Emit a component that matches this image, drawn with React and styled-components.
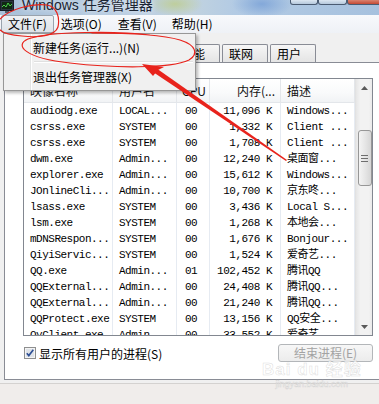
import React from 'react';
import styled, { createGlobalStyle } from 'styled-components';

const GlobalStyle = createGlobalStyle`
  html, body {
    margin: 0;
    padding: 0;
    background: #f0f0f0;
  }
  body {
    font-family: 'Noto Sans CJK SC', 'Noto Sans', sans-serif;
  }
`;

const Page = styled.div`
  position: relative;
  width: 379px;
  height: 404px;
  overflow: hidden;
  background: #f0f0f0;
  display: flex;
  flex-direction: column;
`;

const TitleBar = styled.div`
  display: flex;
  align-items: flex-start;
  height: 15px;
  flex-shrink: 0;
  overflow: hidden;
  background:
    radial-gradient(ellipse 28px 12px at 175px 4px, rgba(190, 205, 140, 0.8), transparent),
    radial-gradient(ellipse 30px 14px at 262px 4px, rgba(120, 160, 215, 0.8), transparent),
    linear-gradient(90deg, #a9c1d9 0%, #b9cde2 35%, #c2d3df 50%, #b3cbe4 62%, #a6c1de 100%);
`;

const AppIcon = styled.svg`
  flex-shrink: 0;
  margin: 0 8px 0 0;
`;

const Title = styled.span`
  font-family: 'Liberation Sans', 'Noto Sans CJK SC', sans-serif;
  font-size: 14px;
  line-height: 15px;
  margin-top: -2px;
  color: #1c2533;
  text-shadow: 0 0 6px rgba(255, 255, 255, 0.9);
  white-space: nowrap;
`;

const Controls = styled.div`
  display: flex;
  margin-left: auto;
  margin-right: -3px;
`;

const CtrlButton = styled.div`
  width: ${(p) => p.$w}px;
  height: 4px;
  border: 1px solid #4a5b72;
  border-top: none;
  border-radius: 0 0 3px 3px;
  background: ${(p) => (p.$close ? 'linear-gradient(#d9826f, #c44a35)' : 'linear-gradient(#dbe6f1, #b5c8dc)')};
`;

const MenuBar = styled.div`
  display: flex;
  align-items: center;
  height: 18px;
  flex-shrink: 0;
  padding-left: 1px;
  background: linear-gradient(#f7f9fc, #eef1f6);
`;

const MenuItem = styled.div`
  height: 16px;
  line-height: 16px;
  padding: 0 ${(p) => p.$pad}px 0 6px;
  font-size: 12px;
  color: #000;
  border: 1px solid ${(p) => (p.$active ? '#9aa3ad' : 'transparent')};
  border-radius: 2px;
  background: ${(p) => (p.$active ? 'linear-gradient(#eef1f4, #dde2e8)' : 'transparent')};
`;

const TabStrip = styled.div`
  display: flex;
  gap: 2px;
  margin-top: 11px;
  padding-left: 6px;
  height: 18px;
  flex-shrink: 0;
`;

const Tab = styled.div`
  box-sizing: border-box;
  width: ${(p) => p.$w}px;
  height: 18px;
  padding-left: 6px;
  font-size: 12px;
  line-height: 17px;
  color: #000;
  border: 1px solid #898c95;
  border-bottom: none;
  border-radius: 2px 2px 0 0;
  background: ${(p) => (p.$selected ? '#fff' : 'linear-gradient(#f6f6f6, #e4e4e4)')};
`;

const Panel = styled.div`
  box-sizing: border-box;
  width: 390px;
  height: 318px;
  margin-left: 4px;
  flex-shrink: 0;
  padding: 15px 0 0 18px;
  border: 1px solid #898c95;
  background: #fff;
`;

const ListView = styled.div`
  box-sizing: border-box;
  display: flex;
  width: 350px;
  height: 258px;
  border: 1px solid #828790;
  overflow: hidden;
`;

const Table = styled.div`
  width: 331px;
  flex-shrink: 0;
`;

const COLS = '89px 64px 33px 71px 74px';

const HeaderRow = styled.div`
  display: grid;
  grid-template-columns: ${COLS};
  height: 23px;
  border-bottom: 1px solid #e3e6ea;
  background: linear-gradient(#ffffff, #f9fafb 60%, #f1f3f5);
`;

const HeaderCell = styled.div`
  font-size: 12px;
  line-height: 23px;
  padding: 0 ${(p) => (p.$right ? '5px' : '6px')};
  text-align: ${(p) => (p.$right ? 'right' : 'left')};
  border-right: 1px solid #e3e6ea;
  white-space: nowrap;
  overflow: hidden;
  color: #111;
`;

const Row = styled.div`
  display: grid;
  grid-template-columns: ${COLS};
  height: 16px;
`;

const Cell = styled.div`
  font-family: 'Liberation Mono', 'Noto Sans CJK SC', monospace;
  font-size: 11px;
  letter-spacing: -0.5px;
  line-height: 16px;
  color: #000;
  padding: ${(p) => p.$pad};
  text-align: ${(p) => (p.$right ? 'right' : 'left')};
  border-right: 1px solid #e6ebf2;
  white-space: nowrap;
  overflow: hidden;
`;

const ScrollBar = styled.div`
  width: 17px;
  flex-shrink: 0;
  display: flex;
  flex-direction: column;
  align-items: center;
  background: linear-gradient(90deg, #e6e6e6, #f2f2f2 25%, #f2f2f2 75%, #e8e8e8);
  border-left: 1px solid #e2e2e2;
`;

const ArrowBox = styled.div`
  height: 17px;
  width: 17px;
  display: flex;
  align-items: center;
  justify-content: center;
  flex-shrink: 0;
`;

const Thumb = styled.div`
  box-sizing: border-box;
  width: 14px;
  height: 56px;
  margin-top: 34px;
  border: 1px solid #979797;
  border-radius: 3px;
  background: linear-gradient(90deg, #f4f4f4, #e6e6e6 50%, #d6d6d6);
  display: flex;
  align-items: center;
  justify-content: center;
`;

const Spacer = styled.div`
  flex: 1;
`;

const Footer = styled.div`
  display: flex;
  align-items: center;
  justify-content: space-between;
  width: 349px;
  margin-top: 8px;
  padding-left: 1px;
  height: 18px;
`;

const CheckLabel = styled.label`
  display: flex;
  align-items: center;
  gap: 3px;
  font-size: 12px;
  color: #000;
`;

const Button = styled.div`
  box-sizing: border-box;
  width: 95px;
  height: 18px;
  border: 1px solid #b3b6b9;
  border-radius: 3px;
  background: linear-gradient(#f7f7f7, #ececec);
  color: #a3a3a3;
  font-size: 12px;
  line-height: 16px;
  text-align: center;
`;

const StatusBar = styled.div`
  flex: 1;
  margin-top: 3px;
  border-top: 1px solid #d4d2d0;
  background: #f0edeb;
`;

const DropMenu = styled.div`
  position: absolute;
  top: 33px;
  left: 3px;
  box-sizing: border-box;
  width: 193px;
  height: 58px;
  padding: 3px 2px;
  border: 1px solid #979797;
  background: #f0f0f0;
  box-shadow: 2px 2px 3px rgba(0, 0, 0, 0.28);
  display: flex;
  flex-direction: column;
  background-image: linear-gradient(90deg, transparent 26px, #e2e3e3 26px, #e2e3e3 27px, #fff 27px, #fff 28px, transparent 28px);
`;

const DropItem = styled.div`
  height: 22px;
  line-height: 22px;
  padding-left: 27px;
  font-size: 12px;
  color: #000;
`;

const Separator = styled.div`
  height: 2px;
  margin: 2px 0 3px 28px;
  border-top: 1px solid #e0e0e0;
  border-bottom: 1px solid #fff;
  box-sizing: border-box;
`;

const Overlay = styled.svg`
  position: absolute;
  top: 0;
  left: 0;
  pointer-events: none;
`;

const Watermark = styled.div`
  position: absolute;
  left: 262px;
  top: 360px;
  display: flex;
  flex-direction: column;
  align-items: center;
  pointer-events: none;
  color: rgba(255, 255, 255, 0.7);
  -webkit-text-stroke: 0.5px rgba(185, 185, 185, 0.5);
`;

const MarkBig = styled.span`
  font-family: 'Liberation Sans', 'Noto Sans CJK SC', sans-serif;
  font-weight: bold;
  font-size: 17px;
  line-height: 19px;
  letter-spacing: 1px;
`;

const MarkSmall = styled.span`
  font-family: 'Liberation Sans', sans-serif;
  font-size: 9px;
  line-height: 11px;
`;

const rows = [
  ['audiodg.exe', 'LOCAL...', '00', '11,096 K', 'Windows...'],
  ['csrss.exe', 'SYSTEM', '00', '1,332 K', 'Client ...'],
  ['csrss.exe', 'SYSTEM', '00', '1,708 K', 'Client ...'],
  ['dwm.exe', 'Admin...', '00', '12,240 K', '桌面窗...'],
  ['explorer.exe', 'Admin...', '00', '15,612 K', 'Windows...'],
  ['JOnlineCli...', 'Admin...', '00', '10,700 K', '京东咚...'],
  ['lsass.exe', 'SYSTEM', '00', '3,436 K', 'Local S...'],
  ['lsm.exe', 'SYSTEM', '00', '1,268 K', '本地会...'],
  ['mDNSRespon...', 'SYSTEM', '00', '1,676 K', 'Bonjour...'],
  ['QiyiServic...', 'SYSTEM', '00', '1,524 K', '爱奇艺...'],
  ['QQ.exe', 'Admin...', '01', '102,452 K', '腾讯QQ'],
  ['QQExternal...', 'Admin...', '00', '24,408 K', '腾讯QQ...'],
  ['QQExternal...', 'Admin...', '00', '21,240 K', '腾讯QQ...'],
  ['QQProtect.exe', 'SYSTEM', '00', '13,156 K', 'QQ安全...'],
  ['QyClient.exe', 'Admin...', '00', '33,552 K', '爱奇艺...'],
];

const tabs = [
  { label: '应用程序', w: 70 },
  { label: '进程', w: 46, selected: true },
  { label: '服务', w: 46 },
  { label: '性能', w: 46 },
  { label: '联网', w: 46 },
  { label: '用户', w: 46 },
];

const menus = [
  { label: '文件(F)', active: true, pad: 6 },
  { label: '选项(O)', pad: 8 },
  { label: '查看(V)', pad: 7 },
  { label: '帮助(H)', pad: 6 },
];

const TaskIcon = () => (
  <AppIcon width="14" height="13" viewBox="0 0 14 13">
    <rect x="0.5" y="0.5" width="13" height="10" fill="#2b3440" stroke="#1a1f26" />
    <rect x="2" y="2" width="10" height="7" fill="#0f2a12" />
    <polyline points="2,7 4,5 6,7 8,3 10,6 12,4" fill="none" stroke="#4bd04b" strokeWidth="1" />
    <rect x="5" y="11" width="4" height="2" fill="#55606c" />
  </AppIcon>
);

const CheckBox = () => (
  <svg width="12" height="12" viewBox="0 0 12 12">
    <rect x="0.5" y="0.5" width="11" height="11" fill="#f4f4f4" stroke="#8e8f8f" />
    <rect x="2" y="2" width="8" height="8" fill="#dfe3e8" />
    <path d="M2.8 6.2 L4.8 8.6 L9.3 2.8" fill="none" stroke="#2e4f94" strokeWidth="1.6" />
  </svg>
);

const App = () => {
  return (
    <Page>
      <GlobalStyle />
      <TitleBar>
        <TaskIcon />
        <Title>Windows 任务管理器</Title>
        <Controls>
          <CtrlButton $w={26} />
          <CtrlButton $w={27} />
          <CtrlButton $w={33} $close />
        </Controls>
      </TitleBar>

      <MenuBar>
        {menus.map((m) => (
          <MenuItem key={m.label} $active={m.active} $pad={m.pad}>
            {m.label}
          </MenuItem>
        ))}
      </MenuBar>

      <TabStrip>
        {tabs.map((t) => (
          <Tab key={t.label} $w={t.w} $selected={t.selected}>
            {t.label}
          </Tab>
        ))}
      </TabStrip>

      <Panel>
        <ListView>
          <Table>
            <HeaderRow>
              <HeaderCell>映像名称</HeaderCell>
              <HeaderCell>用户名</HeaderCell>
              <HeaderCell $right>CPU</HeaderCell>
              <HeaderCell $right>内存(...</HeaderCell>
              <HeaderCell>描述</HeaderCell>
            </HeaderRow>
            {rows.map((r, i) => (
              <Row key={i}>
                <Cell $pad="0 0 0 6px">{r[0]}</Cell>
                <Cell $pad="0 0 0 6px">{r[1]}</Cell>
                <Cell $pad="0 0 0 8px">{r[2]}</Cell>
                <Cell $pad="0 8px 0 0" $right>{r[3]}</Cell>
                <Cell $pad="0 0 0 6px">{r[4]}</Cell>
              </Row>
            ))}
          </Table>
          <ScrollBar>
            <ArrowBox>
              <svg width="7" height="4" viewBox="0 0 7 4">
                <path d="M0 4 L3.5 0 L7 4 Z" fill="#5a5a5a" />
              </svg>
            </ArrowBox>
            <Thumb>
              <svg width="7" height="7" viewBox="0 0 7 7">
                <path d="M0 0.5 H7 M0 3.5 H7 M0 6.5 H7" stroke="#6e6e6e" strokeWidth="1" />
              </svg>
            </Thumb>
            <Spacer />
            <ArrowBox>
              <svg width="7" height="4" viewBox="0 0 7 4">
                <path d="M0 0 L3.5 4 L7 0 Z" fill="#5a5a5a" />
              </svg>
            </ArrowBox>
          </ScrollBar>
        </ListView>

        <Footer>
          <CheckLabel>
            <CheckBox />
            显示所有用户的进程(S)
          </CheckLabel>
          <Button>结束进程(E)</Button>
        </Footer>
      </Panel>

      <StatusBar />

      <DropMenu>
        <DropItem>新建任务(运行...)(N)</DropItem>
        <Separator />
        <DropItem>退出任务管理器(X)</DropItem>
      </DropMenu>

      <Watermark>
        <MarkBig>Bai du 经验</MarkBig>
        <MarkSmall>jingyan.baidu.com</MarkSmall>
      </Watermark>

      <Overlay width="379" height="404" viewBox="0 0 379 404">
        <g fill="none" stroke="#e8231c" strokeLinecap="round" strokeLinejoin="round">
          <path
            d="M0 19 C10 9 32 3 47 5 C57 7 60 17 58 27 C55 36 38 38 22 36 C10 35 3 33 0 30"
            strokeWidth="1.2"
          />
          <path
            d="M150 35 C118 31 50 31 28 39 C14 45 24 58 70 63 C112 68 170 69 189 60 C199 54 196 45 180 40 C160 34 120 33 92 33"
            strokeWidth="1.2"
          />
        </g>
        <polygon points="156,68 287,160 286,161 153,72" fill="#e8231c" />
        <polygon points="142,64 164,67 158,70 153,76" fill="#e8231c" />
      </Overlay>
    </Page>
  );
};

export default App;
